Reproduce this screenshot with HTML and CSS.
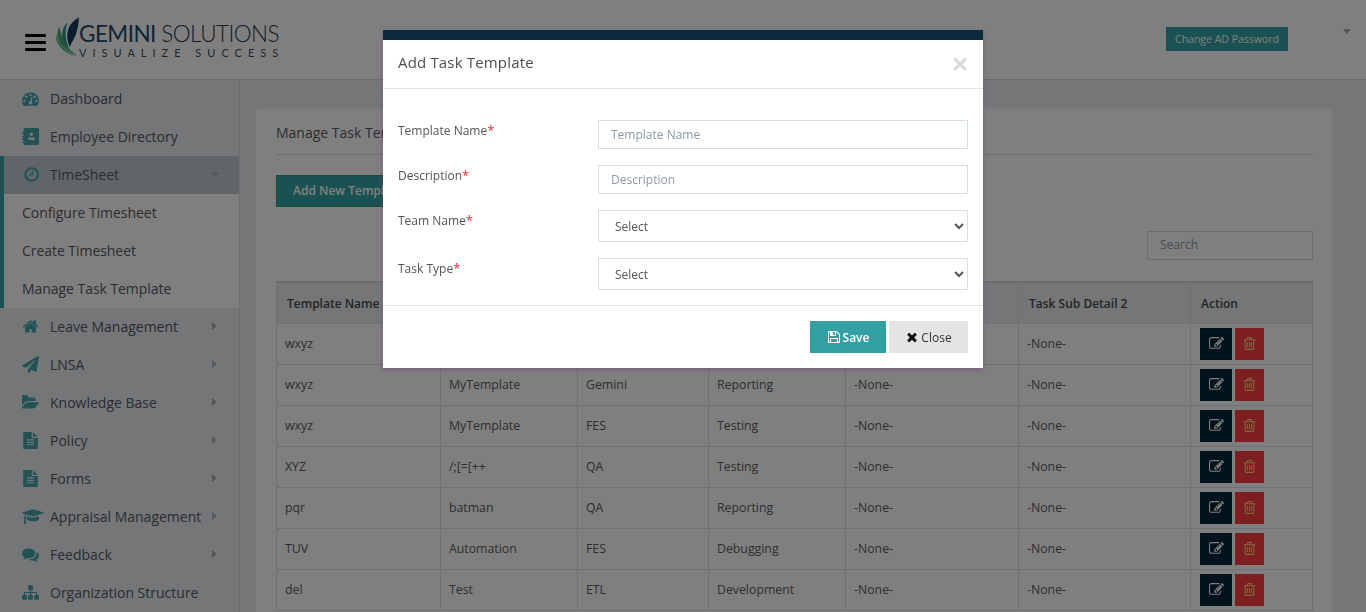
FILE: index.html
```html
<!DOCTYPE html>
<html lang="en">
<head>
    <meta charset="UTF-8">
    <meta name="viewport" content="width=device-width, initial-scale=1.0">
    <title>Manage Task Template</title>
    <link rel="stylesheet" href="styles.css">
</head>
<body>
    <svg class="sprite" xmlns="http://www.w3.org/2000/svg">
        <symbol id="i-dashboard" viewBox="0 0 1792 1792"><path d="M384 1152q0-53-37.5-90.5t-90.5-37.5-90.5 37.5-37.5 90.5 37.5 90.5 90.5 37.5 90.5-37.5 37.5-90.5zm192-448q0-53-37.5-90.5t-90.5-37.5-90.5 37.5-37.5 90.5 37.5 90.5 90.5 37.5 90.5-37.5 37.5-90.5zm428 481l101-382q6-26-7.5-48.5t-38.5-29.5-48 6.5-30 39.5l-101 382q-60 5-107 43.5t-63 98.5q-20 77 20 146t117 89 146-20 89-117q16-60-6-117t-72-91zm660-33q0-53-37.5-90.5t-90.5-37.5-90.5 37.5-37.5 90.5 37.5 90.5 90.5 37.5 90.5-37.5 37.5-90.5zm-640-640q0-53-37.5-90.5t-90.5-37.5-90.5 37.5-37.5 90.5 37.5 90.5 90.5 37.5 90.5-37.5 37.5-90.5zm448 192q0-53-37.5-90.5t-90.5-37.5-90.5 37.5-37.5 90.5 37.5 90.5 90.5 37.5 90.5-37.5 37.5-90.5zm320 448q0 261-141 483-19 29-54 29h-1402q-35 0-54-29-141-221-141-483 0-182 71-348t191-286 286-191 348-71 348 71 286 191 191 286 71 348z"/></symbol>
        <symbol id="i-book" viewBox="0 0 16 16"><path fill-rule="evenodd" d="M2.5 0H15a1 1 0 0 1 1 1v14a1 1 0 0 1-1 1H2.5a1 1 0 0 1-1-1v-1H.7a.7.7 0 0 1 0-1.4h.8v-1.800H.7a.7.7 0 0 1 0-1.400h.8V8.700H.7a.7.7 0 0 1 0-1.400h.8V5.500H.7a.7.7 0 0 1 0-1.400h.8V1a1 1 0 0 1 1-1zM9 4.200a1.500 1.500 0 0 0-1.500 1.800c.1.800.5 1.500 1.500 1.500s1.400-.7 1.500-1.500A1.500 1.500 0 0 0 9 4.200zM5.800 11.200h6.400c0-1.400-.4-2.500-1.700-2.800-.4.300-.9.500-1.500.5s-1.100-.2-1.500-.5c-1.300.3-1.700 1.400-1.700 2.800z"/></symbol>
        <symbol id="i-clock" viewBox="0 0 1536 1792"><path d="M1024 544v448q0 14-9 23t-23 9h-320q-14 0-23-9t-9-23v-64q0-14 9-23t23-9h224v-352q0-14 9-23t23-9h64q14 0 23 9t9 23zm416 352q0-148-73-273t-198-198-273-73-273 73-198 198-73 273 73 273 198 198 273 73 273-73 198-198 73-273zm224 0q0 209-103 385.500t-279.500 279.500-385.500 103-385.500-103-279.500-279.500-103-385.500 103-385.500 279.500-279.500 385.500-103 385.500 103 279.500 279.500 103 385.500z"/></symbol>
        <symbol id="i-home" viewBox="0 0 1792 1792"><path d="M1472 992v480q0 26-19 45t-45 19h-384v-384h-256v384h-384q-26 0-45-19t-19-45v-480q0-1 .5-3t.5-3l575-474 575 474q1 2 1 6zm223-69l-62 74q-8 9-21 11h-3q-13 0-21-7l-692-577-692 577q-12 8-24 7-13-2-21-11l-62-74q-8-10-7-23.500t11-21.500l719-599q32-26 76-26t76 26l244 204v-195q0-14 9-23t23-9h192q14 0 23 9t9 23v408l219 182q10 8 11 21.500t-7 23.500z"/></symbol>
        <symbol id="i-plane" viewBox="0 0 1792 1792"><path d="M1764 11q33 24 27 64l-256 1536q-5 29-32 45-14 8-31 8-11 0-24-5l-453-185-242 295q-18 23-49 23-13 0-22-4-19-7-30.500-23.500t-11.500-36.500v-349l864-1059-1069 925-395-162q-37-14-40-55-2-40 32-59l1664-960q15-9 32-9 20 0 36 11z"/></symbol>
        <symbol id="i-folder" viewBox="0 0 1792 1792"><path d="M1781 931q0 35-35 74l-336 396q-43 51-120.500 86.500t-143.500 35.500h-1088q-34 0-60.500-13t-26.500-43q0-35 35-74l336-396q43-51 120.500-86.500t143.500-35.500h1088q34 0 60.500 13t26.500 43zm-343-344v160h-832q-94 0-197 47.500t-164 119.500l-337 396-5 6q0-4-.5-12.500t-.5-12.500v-960q0-92 66-158t158-66h320q92 0 158 66t66 158v32h544q92 0 158 66t66 158z"/></symbol>
        <symbol id="i-file" viewBox="0 0 1792 1792"><path d="M1596 476q14 14 28 36h-472v-472q22 14 36 28zm-476 164h544v1056q0 40-28 68t-68 28h-1344q-40 0-68-28t-28-68v-1600q0-40 28-68t68-28h800v544q0 40 28 68t68 28zm160 736v-64q0-14-9-23t-23-9h-704q-14 0-23 9t-9 23v64q0 14 9 23t23 9h704q14 0 23-9t9-23zm0-256v-64q0-14-9-23t-23-9h-704q-14 0-23 9t-9 23v64q0 14 9 23t23 9h704q14 0 23-9t9-23zm0-256v-64q0-14-9-23t-23-9h-704q-14 0-23 9t-9 23v64q0 14 9 23t23 9h704q14 0 23-9t9-23z"/></symbol>
        <symbol id="i-cap" viewBox="0 0 2304 1792"><path d="M1774 836l18 316q4 69-82 128t-235 93.500-323 34.500-323-34.500-235-93.500-82-128l18-316 574 181q22 7 48 7t48-7zm530-324q0 23-22 31l-1120 352q-4 1-10 1t-10-1l-652-206q-43 34-71 111.500t-34 178.500q63 36 63 109 0 69-58 107l58 433q2 14-8 25-9 11-24 11h-192q-15 0-24-11-10-11-8-25l58-433q-58-38-58-107 0-73 65-111 11-207 98-330l-333-104q-22-8-22-31t22-31l1120-352q4-1 10-1t10 1l1120 352q22 8 22 31z"/></symbol>
        <symbol id="i-comments" viewBox="0 0 1792 1792"><path d="M1408 768q0 139-94 257t-256.500 186.500-353.500 68.500q-86 0-176-16-124 88-278 128-36 9-86 16h-3q-11 0-20.500-8t-11.500-21q-1-3-1-6.500t.5-6.500 2-6l2.500-5 3.500-5.500 4-5 4.500-5 4-4.500q5-6 23-25t26-29.500 22.500-29 25-38.500 20.500-44q-124-72-195-177t-71-224q0-139 94-257t256.500-186.500 353.500-68.500 353.500 68.500 256.500 186.500 94 257zm384 256q0 120-71 224.500t-195 176.500q10 24 20.500 44t25 38.500 22.500 29 26 29.500 23 25q1 1 4 4.500t4.500 5 4 5 3.500 5.500l2.500 5 2 6 .5 6.500-1 6.500q-3 14-13 22t-22 7q-50-7-86-16-154-40-278-128-90 16-176 16-271 0-472-132 58 4 88 4 161 0 309-45t264-129q125-92 192-212t67-254q0-77-23-152 129 71 204 178t75 230z"/></symbol>
        <symbol id="i-sitemap" viewBox="0 0 1792 1792"><path d="M1792 1248v320q0 40-28 68t-68 28h-320q-40 0-68-28t-28-68v-320q0-40 28-68t68-28h96v-192h-512v192h96q40 0 68 28t28 68v320q0 40-28 68t-68 28h-320q-40 0-68-28t-28-68v-320q0-40 28-68t68-28h96v-192h-512v192h96q40 0 68 28t28 68v320q0 40-28 68t-68 28h-320q-40 0-68-28t-28-68v-320q0-40 28-68t68-28h96v-192q0-52 38-90t90-38h512v-192h-96q-40 0-68-28t-28-68v-320q0-40 28-68t68-28h320q40 0 68 28t28 68v320q0 40-28 68t-68 28h-96v192h512q52 0 90 38t38 90v192h96q40 0 68 28t28 68z"/></symbol>
        <symbol id="i-edit" viewBox="0 0 1792 1792"><path d="M888 1184l116-116-152-152-116 116v56h96v96h56zm440-720q-16-16-33 1l-350 350q-17 17-1 33t33-1l350-350q17-17 1-33zm80 594v190q0 119-84.500 203.500t-203.500 84.500h-832q-119 0-203.500-84.500t-84.500-203.500v-832q0-119 84.500-203.500t203.500-84.500h832q63 0 117 25 15 7 18 23 3 17-9 29l-49 49q-14 14-32 8-23-6-45-6h-832q-66 0-113 47t-47 113v832q0 66 47 113t113 47h832q66 0 113-47t47-113v-126q0-13 9-22l64-64q15-15 35-7t20 29zm-96-738l288 288-672 672h-288v-288zm444 132l-92 92-288-288 92-92q28-28 68-28t68 28l152 152q28 28 28 68t-28 68z"/></symbol>
        <symbol id="i-trash" viewBox="0 0 1792 1792"><path d="M704 736v576q0 14-9 23t-23 9h-64q-14 0-23-9t-9-23v-576q0-14 9-23t23-9h64q14 0 23 9t9 23zm256 0v576q0 14-9 23t-23 9h-64q-14 0-23-9t-9-23v-576q0-14 9-23t23-9h64q14 0 23 9t9 23zm256 0v576q0 14-9 23t-23 9h-64q-14 0-23-9t-9-23v-576q0-14 9-23t23-9h64q14 0 23 9t9 23zm128 724v-948h-896v948q0 22 7 40.500t14.500 27 10.500 8.500h832q3 0 10.500-8.500t14.500-27 7-40.500zm-672-1076h448l-48-117q-7-9-17-11h-317q-10 2-17 11zm928 32v64q0 14-9 23t-23 9h-96v948q0 83-47 143.500t-113 60.500h-832q-66 0-113-58.500t-47-141.500v-952h-96q-14 0-23-9t-9-23v-64q0-14 9-23t23-9h309l70-167q15-37 54-63t79-26h320q40 0 79 26t54 63l70 167h309q14 0 23 9t9 23z"/></symbol>
        <symbol id="i-save" viewBox="0 0 1792 1792"><path d="M512 1536h768v-384h-768v384zm896 0h128v-896q0-14-10-38.500t-20-34.500l-281-281q-10-10-34-20t-39-10v416q0 40-28 68t-68 28h-576q-40 0-68-28t-28-68v-416h-128v1280h128v-416q0-40 28-68t68-28h832q40 0 68 28t28 68v416zm-384-928v-320q0-13-9.500-22.500t-22.500-9.500h-192q-13 0-22.500 9.500t-9.500 22.500v320q0 13 9.500 22.500t22.500 9.500h192q13 0 22.500-9.500t9.500-22.500zm640 32v928q0 40-28 68t-68 28h-1344q-40 0-68-28t-28-68v-1344q0-40 28-68t68-28h928q40 0 88 20t76 48l280 280q28 28 48 76t20 88z"/></symbol>
        <symbol id="i-times" viewBox="0 0 1408 1792"><path d="M1298 1322q0 40-28 68l-136 136q-28 28-68 28t-68-28l-294-294-294 294q-28 28-68 28t-68-28l-136-136q-28-28-28-68t28-68l294-294-294-294q-28-28-28-68t28-68l136-136q28-28 68-28t68 28l294 294 294-294q28-28 68-28t68 28l136 136q28 28 28 68t-28 68l-294 294 294 294q28 28 28 68z"/></symbol>
    </svg>

    <header class="topbar">
        <div class="burger"><span></span><span></span><span></span></div>
        <div class="logo">
            <svg class="logo-leaf" viewBox="0 0 26 42">
                <path fill="#4aa873" d="M5 10C0 18 2 32 25 42 13 34 7 24 5 10z"/>
                <path fill="#5cb985" d="M1 18C0 28 8 38 23 42 11 36 4 28 1 18z"/>
                <path fill="#2f8f94" d="M14 5C6 12 5 24 15 33 11 23 10 14 14 5z"/>
                <path fill="#17395a" d="M26 0C14 6 10 18 16 32 18 26 25 20 26 0z"/>
            </svg>
            <div class="logo-text">
                <div class="logo-name"><b>GEMINI</b> SOLUTIONS</div>
                <div class="logo-tag">VISUALIZE SUCCESS</div>
            </div>
        </div>
        <a class="ad-btn">Change AD Password</a>
        <span class="caret-down top-caret"></span>
    </header>

    <div class="layout">
        <nav class="sidebar">
            <a class="nav-item"><svg class="nav-icon"><use href="#i-dashboard"/></svg>Dashboard</a>
            <a class="nav-item"><svg class="nav-icon"><use href="#i-book"/></svg>Employee Directory</a>
            <div class="nav-group">
                <a class="nav-item active"><svg class="nav-icon"><use href="#i-clock"/></svg>TimeSheet<span class="caret-down nav-caret"></span></a>
                <a class="sub-item">Configure Timesheet</a>
                <a class="sub-item">Create Timesheet</a>
                <a class="sub-item">Manage Task Template</a>
            </div>
            <a class="nav-item"><svg class="nav-icon"><use href="#i-home"/></svg>Leave Management<span class="caret-right"></span></a>
            <a class="nav-item"><svg class="nav-icon"><use href="#i-plane"/></svg>LNSA<span class="caret-right"></span></a>
            <a class="nav-item"><svg class="nav-icon"><use href="#i-folder"/></svg>Knowledge Base<span class="caret-right"></span></a>
            <a class="nav-item"><svg class="nav-icon"><use href="#i-file"/></svg>Policy<span class="caret-right"></span></a>
            <a class="nav-item"><svg class="nav-icon"><use href="#i-file"/></svg>Forms<span class="caret-right"></span></a>
            <a class="nav-item"><svg class="nav-icon cap"><use href="#i-cap"/></svg>Appraisal Management<span class="caret-right"></span></a>
            <a class="nav-item"><svg class="nav-icon"><use href="#i-comments"/></svg>Feedback<span class="caret-right"></span></a>
            <a class="nav-item"><svg class="nav-icon"><use href="#i-sitemap"/></svg>Organization Structure</a>
        </nav>

        <main class="content">
            <section class="card">
                <h2 class="card-title">Manage Task Template</h2>
                <button class="add-btn">Add New Template</button>
                <div class="search-row"><input class="search" placeholder="Search"></div>
                <table class="grid">
                    <thead>
                        <tr>
                            <th class="c1">Template Name</th>
                            <th class="c2">Description</th>
                            <th class="c3">Team Name</th>
                            <th class="c4">Task Type</th>
                            <th class="c5">Task Sub Detail 1</th>
                            <th class="c6">Task Sub Detail 2</th>
                            <th class="c7">Action</th>
                        </tr>
                    </thead>
                    <tbody>
                        <tr><td>wxyz</td><td>MyTemplate</td><td>Gemini</td><td>Testing</td><td>-None-</td><td>-None-</td><td class="actions"><a class="act edit"><svg><use href="#i-edit"/></svg></a><a class="act del"><svg><use href="#i-trash"/></svg></a></td></tr>
                        <tr><td>wxyz</td><td>MyTemplate</td><td>Gemini</td><td>Reporting</td><td>-None-</td><td>-None-</td><td class="actions"><a class="act edit"><svg><use href="#i-edit"/></svg></a><a class="act del"><svg><use href="#i-trash"/></svg></a></td></tr>
                        <tr><td>wxyz</td><td>MyTemplate</td><td>FES</td><td>Testing</td><td>-None-</td><td>-None-</td><td class="actions"><a class="act edit"><svg><use href="#i-edit"/></svg></a><a class="act del"><svg><use href="#i-trash"/></svg></a></td></tr>
                        <tr><td>XYZ</td><td>/;[=[++</td><td>QA</td><td>Testing</td><td>-None-</td><td>-None-</td><td class="actions"><a class="act edit"><svg><use href="#i-edit"/></svg></a><a class="act del"><svg><use href="#i-trash"/></svg></a></td></tr>
                        <tr><td>pqr</td><td>batman</td><td>QA</td><td>Reporting</td><td>-None-</td><td>-None-</td><td class="actions"><a class="act edit"><svg><use href="#i-edit"/></svg></a><a class="act del"><svg><use href="#i-trash"/></svg></a></td></tr>
                        <tr><td>TUV</td><td>Automation</td><td>FES</td><td>Debugging</td><td>-None-</td><td>-None-</td><td class="actions"><a class="act edit"><svg><use href="#i-edit"/></svg></a><a class="act del"><svg><use href="#i-trash"/></svg></a></td></tr>
                        <tr><td>del</td><td>Test</td><td>ETL</td><td>Development</td><td>-None-</td><td>-None-</td><td class="actions"><a class="act edit"><svg><use href="#i-edit"/></svg></a><a class="act del"><svg><use href="#i-trash"/></svg></a></td></tr>
                    </tbody>
                </table>
            </section>
        </main>
    </div>

    <div class="backdrop"></div>

    <div class="modal">
        <div class="modal-head">
            <h4 class="modal-title">Add Task Template</h4>
            <span class="modal-x">&times;</span>
        </div>
        <form class="modal-body">
            <label class="field-label">Template Name<em>*</em></label>
            <input class="field" placeholder="Template Name">
            <label class="field-label">Description<em>*</em></label>
            <input class="field" placeholder="Description">
            <label class="field-label">Team Name<em>*</em></label>
            <select class="field pick"><option>Select</option></select>
            <label class="field-label">Task Type<em>*</em></label>
            <select class="field pick"><option>Select</option></select>
        </form>
        <div class="modal-foot">
            <button class="btn save"><svg><use href="#i-save"/></svg>Save</button>
            <button class="btn close"><svg><use href="#i-times"/></svg>Close</button>
        </div>
    </div>
</body>
</html>
```

FILE: styles.css
```css
* { box-sizing: border-box; }
html, body { height: 100%; }
body { margin: 0; overflow: hidden; font-family: "Open Sans", sans-serif; font-size: 13px; color: #555; background: #e9ecef; }
.sprite { display: none; }

/* top bar */
.topbar { height: 80px; display: flex; align-items: center; padding: 0 0 0 25px; background: #fff; border-bottom: 1px solid #d4d6d8; position: relative; }
.burger { width: 21px; display: flex; flex-direction: column; gap: 4px; margin-right: 9px; margin-top: 5px; }
.burger span { height: 3px; background: #000; border-radius: 1px; }
.logo { display: flex; align-items: flex-start; height: 42px; margin-top: -5px; }
.logo-leaf { width: 24px; height: 42px; margin-right: 0; flex: none; }
.logo-text { padding-top: 6px; }
.logo-name { font-family: Lato, sans-serif; font-weight: 300; font-size: 22.5px; line-height: 24px; height: 24px; color: #24384a; letter-spacing: -.55px; white-space: nowrap; }
.logo-name b { font-weight: 400; color: #1d4a6b; }
.logo-tag { font-family: Lato, sans-serif; font-size: 11px; line-height: 11px; margin-top: 1px; letter-spacing: 6px; color: #3d4d5a; white-space: nowrap; }
.ad-btn { margin-left: auto; margin-right: 78px; margin-top: -1px; height: 24px; width: 122px; text-align: center; line-height: 24px; font-size: 10.5px; color: #fff; background: #35a3a5; }
.caret-down { width: 0; height: 0; border-left: 4px solid transparent; border-right: 4px solid transparent; border-top: 5px solid #aaa; }
.top-caret { position: absolute; right: 15px; top: 29px; }

/* sidebar */
.layout { display: flex; height: calc(100vh - 80px); }
.sidebar { width: 240px; flex: none; border-right: 1px solid #d8dadc; }
.nav-item { height: 38px; display: flex; align-items: center; padding: 0 0 2px 22px; font-size: 14px; color: #555a66; white-space: nowrap; }
.nav-item.active { background: #c0cbd0; border-left: 4px solid #35a3a5; padding-left: 18px; }
.nav-group { background: #fff; box-shadow: inset 4px 0 0 #35a3a5; }
.nav-icon { width: 17px; height: 17px; fill: #45a5a8; margin-right: 11px; flex: none; }
.nav-icon.cap { width: 22px; margin-right: 6px; }
.nav-caret { margin-left: auto; margin-right: 20px; border-top-color: #a9aeb2; }
.caret-right { margin-left: auto; margin-right: 22px; width: 0; height: 0; border-top: 4px solid transparent; border-bottom: 4px solid transparent; border-left: 5px solid #a9aeb2; }
.sub-item { display: flex; align-items: center; height: 38px; padding: 0 0 2px 22px; font-size: 14px; letter-spacing: -.05px; color: #555a66; }

/* page content */
.content { flex: 1; padding: 28px 33px 0 15px; min-width: 0; }
.card { background: #fff; border: 1px solid #f2f3f4; border-radius: 4px; padding: 0 19px 0 20px; height: 600px; }
.card-title { margin: 0; height: 46px; line-height: 48px; font-size: 14px; font-weight: 400; color: #555a66; border-bottom: 1px solid #d9dcde; }
.add-btn { display: block; margin-top: 20px; width: 165px; height: 32px; text-align: left; padding: 0 16px 2px; background: #35a3a5; border: 1px solid #2f9a60; color: #fff; font: 600 12px "Open Sans", sans-serif; }
.search-row { display: flex; justify-content: flex-end; margin-top: 24px; }
.search { width: 166px; height: 29px; padding: 0 12px 2px; border: 1px solid #d5dbe0; background: #fff; font: 12px "Open Sans", sans-serif; }
.search::placeholder { color: #8a9aa5; }

.grid { width: 1037px; margin-top: 21px; border-collapse: collapse; table-layout: fixed; border-top: 2px solid #d5dbe0; }
.grid th, .grid td { border: 1px solid #dde2e6; padding: 0 8px; height: 41px; text-align: left; white-space: nowrap; overflow: hidden; }
.grid th { background: #e9ecef; font-size: 12px; font-weight: 600; color: #4a4a4a; padding: 2px 0 0 10px; }
.grid td { font-size: 12.3px; color: #5c5c5c; }
.c1 { width: 164px; }
.c2 { width: 137px; }
.c3 { width: 131px; }
.c4 { width: 137px; }
.c5 { width: 173px; }
.c6 { width: 172px; }
.grid .actions { padding: 0 0 0 9px; }
.act { display: inline-flex; align-items: center; justify-content: center; width: 32px; height: 32px; vertical-align: middle; }
.act svg { width: 15px; height: 15px; }
.edit { background: #05263a; margin-right: 3px; fill: #fff; }
.del { width: 29px; background: #fa3c42; fill: #ffd27a; }

/* modal */
.backdrop { position: fixed; inset: 0; background: rgba(0, 0, 0, .5); }
.modal { position: fixed; left: 383px; top: 30px; width: 600px; height: 338px; background: #fff; border-top: 10px solid #0b2a3c; box-shadow: 0 2px 5px rgba(120, 60, 120, .5); }
.modal-head { height: 49px; display: flex; align-items: center; justify-content: space-between; padding: 0 15px; border-bottom: 1px solid #dbe5ea; }
.modal-title { margin: 0 0 4px; font-size: 15px; letter-spacing: .17px; font-weight: 400; color: #4a4f55; }
.modal-x { font-size: 31px; line-height: 30px; font-weight: 700; color: #dcdcdc; margin: 0 -1px 2px 0; }
.modal-body { display: grid; grid-template-columns: 200px 370px; row-gap: 16px; padding: 31px 15px 15px; height: 217px; align-content: start; border-bottom: 1px solid #dbe5ea; }
.field-label { font-size: 12px; line-height: 20px; color: #555; }
.field-label em { color: #f0262e; font-style: normal; font-size: 13px; }
.field { height: 29px; width: 370px; padding: 0 12px; border: 1px solid #d5e0e6; background: #fff; font: 12px "Open Sans", sans-serif; color: #555; }
.field::placeholder { color: #8a9aa5; }
.pick { height: 32px; padding: 0 12px; }
.modal-foot { display: flex; justify-content: flex-end; gap: 3px; padding: 15px 15px 0; }
.btn { height: 32px; border: 0; display: inline-flex; align-items: center; justify-content: center; font: 12px "Open Sans", sans-serif; }
.btn svg { width: 14px; height: 14px; margin-right: 2px; }
.save { width: 76px; background: #33a0a3; color: #fff; fill: #fff; font-weight: 600; }
.close { width: 79px; background: #e4e4e4; color: #333; fill: #111; }
```
